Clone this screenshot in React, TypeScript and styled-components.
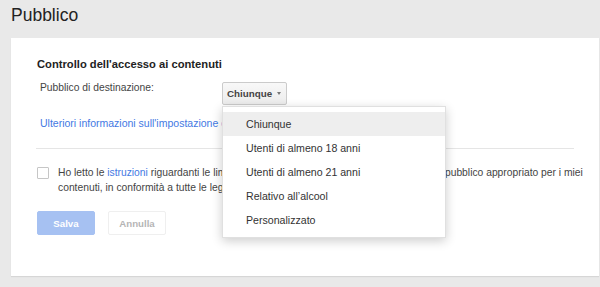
import React from 'react';
import styled, { createGlobalStyle } from 'styled-components';

const GlobalStyle = createGlobalStyle`
  html, body {
    margin: 0;
    padding: 0;
    background: #e9e9e9;
    font-family: "Liberation Sans", Arial, sans-serif;
    color: #444;
  }
`;

const Page = styled.div`
  width: 600px;
  height: 287px;
  overflow: hidden;
`;

const Title = styled.h1`
  margin: 0;
  height: 38px;
  box-sizing: border-box;
  padding: 4px 0 0 11px;
  font-size: 17.5px;
  line-height: 22px;
  font-weight: normal;
  color: #222;
`;

const Card = styled.div`
  margin-left: 11px;
  width: 588px;
  height: 238px;
  box-sizing: border-box;
  padding: 18px 25px 0 25px;
  background: #fff;
  box-shadow: 0 1px 1px rgba(0, 0, 0, 0.08);
`;

const Heading = styled.h2`
  margin: 0 0 0 1px;
  font-size: 11.2px;
  line-height: 16px;
  font-weight: bold;
  color: #222;
`;

const FieldRow = styled.div`
  display: flex;
  align-items: flex-start;
  margin-top: 10px;
`;

const FieldLabel = styled.div`
  width: 182px;
  margin-left: 4px;
  font-size: 10.3px;
  line-height: 12px;
  color: #444;
`;

const Dropdown = styled.div`
  position: relative;
`;

const DropButton = styled.button`
  display: flex;
  align-items: center;
  height: 23px;
  width: 65px;
  box-sizing: border-box;
  padding: 0 0 0 4px;
  border: 1px solid #cbcbcb;
  border-radius: 2px;
  background: linear-gradient(#f8f8f8, #ececec);
  font-family: inherit;
  font-size: 9.8px;
  font-weight: bold;
  color: #444;
  cursor: pointer;
`;

const Caret = styled.span`
  margin-left: 5px;
  width: 0;
  height: 0;
  border-left: 2.5px solid transparent;
  border-right: 2.5px solid transparent;
  border-top: 3px solid #777;
`;

const Menu = styled.ul`
  position: absolute;
  top: 24px;
  left: 0;
  z-index: 2;
  width: 224px;
  box-sizing: border-box;
  margin: 0;
  padding: 5px 0 5px;
  list-style: none;
  background: #fff;
  border: 1px solid rgba(0, 0, 0, 0.12);
  box-shadow: 0 3px 10px rgba(0, 0, 0, 0.2);
`;

const MenuItem = styled.li<{ $active?: boolean }>`
  height: 24px;
  line-height: 24px;
  padding-left: 23px;
  font-size: 10.6px;
  color: #333;
  background: ${(p) => (p.$active ? '#eeeeee' : 'transparent')};
`;

const InfoLink = styled.a`
  display: block;
  margin: 10px 0 0 4px;
  font-size: 10.5px;
  line-height: 16px;
  color: #4379e3;
  text-decoration: none;
  white-space: nowrap;
`;

const Divider = styled.hr`
  margin: 17px 0 0;
  border: none;
  border-top: 1px solid #e5e5e5;
`;

const ConsentRow = styled.label`
  display: flex;
  align-items: flex-start;
  gap: 9px;
  margin-top: 16px;
`;

const Checkbox = styled.span`
  flex: none;
  width: 12px;
  height: 12px;
  box-sizing: border-box;
  margin: 2px 0 0 1px;
  border: 1px solid #c6c6c6;
  border-radius: 1px;
  background: #fff;
`;

const ConsentText = styled.p`
  margin: 0;
  font-size: 10.3px;
  line-height: 15px;
  color: #444;
  white-space: nowrap;

  a {
    color: #4379e3;
    text-decoration: none;
  }
`;

const Actions = styled.div`
  display: flex;
  gap: 13px;
  margin: 16px 0 0 1px;
`;

const ActionButton = styled.button<{ $primary?: boolean }>`
  width: 58px;
  height: 24px;
  box-sizing: border-box;
  border-radius: 2px;
  border: 1px solid ${(p) => (p.$primary ? '#a6c1f2' : '#efefef')};
  background: ${(p) => (p.$primary ? '#a6c1f2' : '#fff')};
  color: ${(p) => (p.$primary ? '#fff' : '#b5b5b5')};
  font-family: inherit;
  font-size: 9.7px;
  font-weight: bold;
`;

const options = [
  'Chiunque',
  'Utenti di almeno 18 anni',
  'Utenti di almeno 21 anni',
  'Relativo all\u2019alcool',
  'Personalizzato',
];

const App: React.FC = () => {
  return (
    <Page>
      <GlobalStyle />
      <Title>Pubblico</Title>
      <Card>
        <Heading>Controllo dell'accesso ai contenuti</Heading>
        <FieldRow>
          <FieldLabel>Pubblico di destinazione:</FieldLabel>
          <Dropdown>
            <DropButton>
              Chiunque
              <Caret />
            </DropButton>
            <Menu>
              {options.map((o, i) => (
                <MenuItem key={o} $active={i === 0}>
                  {o}
                </MenuItem>
              ))}
            </Menu>
          </Dropdown>
        </FieldRow>
        <InfoLink href="#">Ulteriori informazioni sull'impostazione del pubblico</InfoLink>
        <Divider />
        <ConsentRow>
          <Checkbox />
          <ConsentText>
            Ho letto le <a href="#">istruzioni</a> riguardanti le limitazioni relative ai contenuti e ho
            selezionato un pubblico appropriato per i miei
            <br />
            contenuti, in conformità a tutte le leggi e le norme vigenti.
          </ConsentText>
        </ConsentRow>
        <Actions>
          <ActionButton $primary>Salva</ActionButton>
          <ActionButton>Annulla</ActionButton>
        </Actions>
      </Card>
    </Page>
  );
};

export default App;
